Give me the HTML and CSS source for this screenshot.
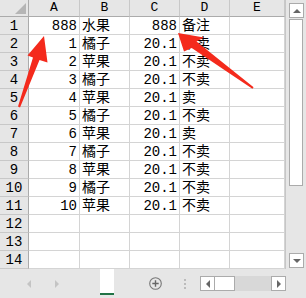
FILE: index.html
```html
<!DOCTYPE html>
<html>
<head>
  <title>Sheet1</title>
  <link rel="stylesheet" href="styles.css">
</head>
<body>
  <div class="window">
    <div class="main">
      <div class="sheet">
        <div class="corner"><span class="corner-tri"></span></div>
        <div class="colhead">A</div>
        <div class="colhead">B</div>
        <div class="colhead">C</div>
        <div class="colhead">D</div>
        <div class="colhead">E</div>

        <div class="rowhead">1</div><div class="cell num">888</div><div class="cell">水果</div><div class="cell num">888</div><div class="cell">备注</div><div class="cell"></div>
        <div class="rowhead">2</div><div class="cell num">1</div><div class="cell">橘子</div><div class="cell num">20.1</div><div class="cell">不卖</div><div class="cell"></div>
        <div class="rowhead">3</div><div class="cell num">2</div><div class="cell">苹果</div><div class="cell num">20.1</div><div class="cell">不卖</div><div class="cell"></div>
        <div class="rowhead">4</div><div class="cell num">3</div><div class="cell">橘子</div><div class="cell num">20.1</div><div class="cell">不卖</div><div class="cell"></div>
        <div class="rowhead">5</div><div class="cell num">4</div><div class="cell">苹果</div><div class="cell num">20.1</div><div class="cell">卖</div><div class="cell"></div>
        <div class="rowhead">6</div><div class="cell num">5</div><div class="cell">橘子</div><div class="cell num">20.1</div><div class="cell">不卖</div><div class="cell"></div>
        <div class="rowhead">7</div><div class="cell num">6</div><div class="cell">苹果</div><div class="cell num">20.1</div><div class="cell">卖</div><div class="cell"></div>
        <div class="rowhead">8</div><div class="cell num">7</div><div class="cell">橘子</div><div class="cell num">20.1</div><div class="cell">不卖</div><div class="cell"></div>
        <div class="rowhead">9</div><div class="cell num">8</div><div class="cell">苹果</div><div class="cell num">20.1</div><div class="cell">不卖</div><div class="cell"></div>
        <div class="rowhead">10</div><div class="cell num">9</div><div class="cell">橘子</div><div class="cell num">20.1</div><div class="cell">不卖</div><div class="cell"></div>
        <div class="rowhead">11</div><div class="cell num">10</div><div class="cell">苹果</div><div class="cell num">20.1</div><div class="cell">不卖</div><div class="cell"></div>
        <div class="rowhead">12</div><div class="cell"></div><div class="cell"></div><div class="cell"></div><div class="cell"></div><div class="cell"></div>
        <div class="rowhead">13</div><div class="cell"></div><div class="cell"></div><div class="cell"></div><div class="cell"></div><div class="cell"></div>
        <div class="rowhead">14</div><div class="cell"></div><div class="cell"></div><div class="cell"></div><div class="cell"></div><div class="cell"></div>
      </div>

      <div class="vscroll">
        <div class="sbtn"><span class="tri-up"></span></div>
        <div class="vthumb"></div>
        <div class="vtrack"></div>
        <div class="sbtn"><span class="tri-down"></span></div>
      </div>
    </div>

    <div class="tabbar">
      <span class="nav-tri nav-left"></span>
      <span class="nav-tri nav-right"></span>
      <div class="sheet-tab"></div>
      <div class="add-sheet">
        <svg width="13" height="13" viewBox="0 0 13 13">
          <circle cx="6.5" cy="6.5" r="5.8" fill="none" stroke="#777" stroke-width="1.1"/>
          <path d="M6.5 3.3v6.4M3.3 6.5h6.4" stroke="#666" stroke-width="1.4"/>
        </svg>
      </div>
      <div class="dots"><i></i><i></i><i></i></div>
      <div class="hscroll">
        <div class="sbtn"><span class="tri-left"></span></div>
        <div class="hthumb"></div>
        <div class="htrack"></div>
        <div class="sbtn"><span class="tri-right"></span></div>
      </div>
    </div>

    <svg class="arrows" width="306" height="298" viewBox="0 0 306 298">
      <polygon points="44,36 47.5,62.5 39.5,60 20,107.5 18,106.5 33,57.5 27.5,55.5" fill="#f42a1c"/>
      <polygon points="178,33 204,37.5 196.5,41.6 253.6,87.2 252.4,88.8 191.7,48 184,51.5" fill="#f42a1c"/>
    </svg>
  </div>
</body>
</html>
```

FILE: styles.css
```css
body {
  margin: 0;
  background-color: #fff;
}

.window {
  position: relative;
  width: 306px;
  height: 298px;
  overflow: hidden;
  font-family: "Liberation Mono", "Noto Sans CJK SC", monospace;
  font-size: 14px;
  color: #000;
}

.main {
  display: flex;
  height: 269px;
}

.sheet {
  display: grid;
  grid-template-columns: 29px 51px 50px 50px 50px 55px;
  grid-template-rows: 17px repeat(14, 18px);
  width: 285px;
}

.sheet > div {
  box-sizing: border-box;
}

.corner {
  position: relative;
  background-color: #e6e6e6;
  border-right: 1px solid #ababab;
  border-bottom: 1px solid #ababab;
}

.corner-tri {
  position: absolute;
  right: 2px;
  bottom: 2px;
  width: 0;
  height: 0;
  border-left: 11px solid transparent;
  border-bottom: 11px solid #b5b5b5;
}

.colhead {
  background-color: #e6e6e6;
  border-right: 1px solid #c8c8c8;
  border-bottom: 1px solid #ababab;
  text-align: center;
  line-height: 16px;
  font-size: 13px;
}

.rowhead {
  background-color: #e6e6e6;
  border-right: 1px solid #ababab;
  border-bottom: 1px solid #c8c8c8;
  text-align: center;
  line-height: 18px;
}

.cell {
  border-right: 1px solid #d4d4d4;
  border-bottom: 1px solid #d4d4d4;
  padding: 0 2px;
  line-height: 18px;
  white-space: nowrap;
  overflow: hidden;
}

.cell.num {
  text-align: right;
  padding-right: 2px;
}

.vscroll {
  display: flex;
  flex-direction: column;
  width: 21px;
  padding: 3px 3px 1px 3px;
  box-sizing: border-box;
  background-color: #e6e6e6;
  border-left: 1px solid #c6c6c6;
  gap: 1px;
}

.sbtn {
  width: 15px;
  height: 15px;
  box-sizing: border-box;
  background-color: #fff;
  border: 1px solid #ababab;
  display: flex;
  align-items: center;
  justify-content: center;
  flex-shrink: 0;
}

.vthumb {
  height: 165px;
  background-color: #fff;
  border: 1px solid #ababab;
}

.vtrack {
  flex: 1;
}

.tri-up, .tri-down, .tri-left, .tri-right {
  width: 0;
  height: 0;
}

.tri-up {
  border-left: 4px solid transparent;
  border-right: 4px solid transparent;
  border-bottom: 4px solid #666;
}

.tri-down {
  border-left: 4px solid transparent;
  border-right: 4px solid transparent;
  border-top: 4px solid #666;
}

.tri-left {
  border-top: 4px solid transparent;
  border-bottom: 4px solid transparent;
  border-right: 4px solid #666;
}

.tri-right {
  border-top: 4px solid transparent;
  border-bottom: 4px solid transparent;
  border-left: 4px solid #666;
}

.tabbar {
  display: flex;
  align-items: center;
  height: 29px;
  background-color: #e6e6e6;
}

.nav-tri {
  width: 0;
  height: 0;
  border-top: 4px solid transparent;
  border-bottom: 4px solid transparent;
}

.nav-left {
  margin-left: 27px;
  border-right: 4px solid #c4c4c4;
}

.nav-right {
  margin-left: 24px;
  border-left: 4px solid #c4c4c4;
}

.sheet-tab {
  align-self: flex-start;
  margin-left: 41px;
  width: 14px;
  height: 24px;
  background-color: #fff;
  border-bottom: 2px solid #217346;
}

.add-sheet {
  margin-left: 35px;
  display: flex;
}

.dots {
  display: flex;
  flex-direction: column;
  gap: 2px;
  margin-left: 22px;
}

.dots i {
  display: block;
  width: 2px;
  height: 2px;
  background-color: #bbb;
}

.hscroll {
  display: flex;
  margin-left: 14px;
}

.hthumb {
  width: 20px;
  height: 15px;
  box-sizing: border-box;
  background-color: #fff;
  border: 1px solid #ababab;
  border-left: none;
}

.htrack {
  width: 36px;
  height: 15px;
  background-color: #d8d8d8;
}

.arrows {
  position: absolute;
  left: 0;
  top: 0;
  pointer-events: none;
}
```
